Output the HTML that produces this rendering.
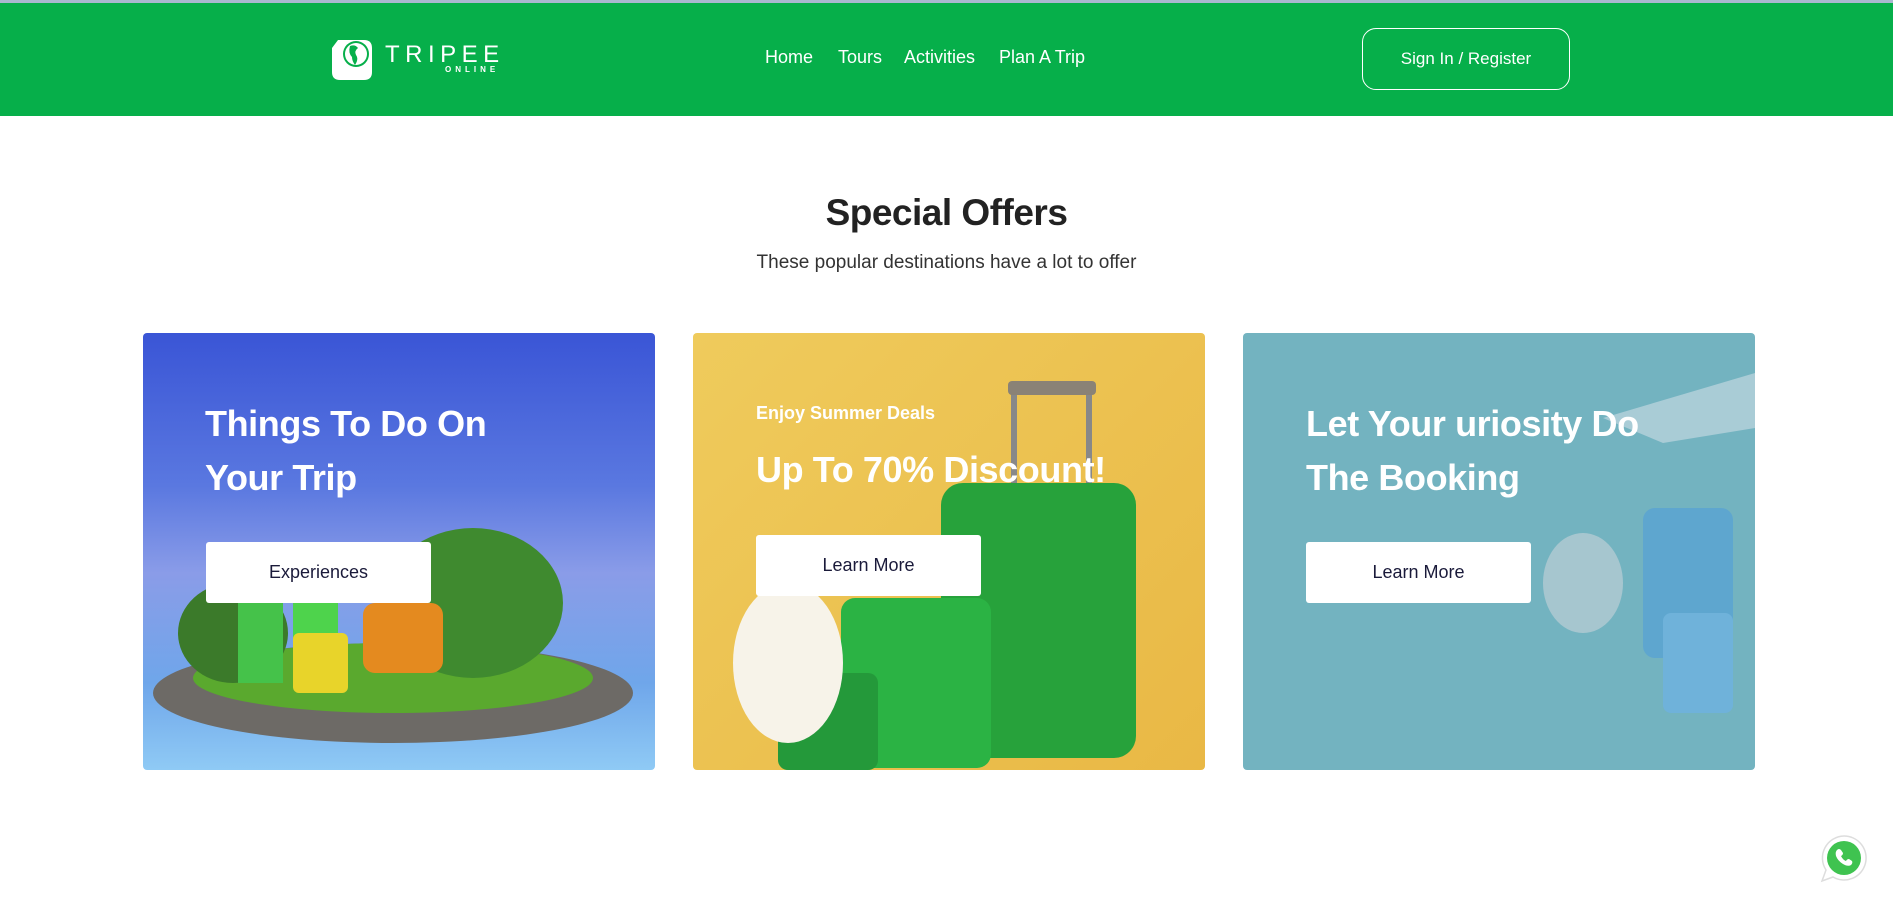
<!DOCTYPE html>
<html><head><meta charset="utf-8"><style>
*{margin:0;padding:0;box-sizing:border-box}
body{width:1893px;height:906px;overflow:hidden;background:#fff;font-family:"Liberation Sans",sans-serif;position:relative}
.top{position:absolute;left:0;top:0;width:1893px;height:3px;background:#a9b8d0}
.hdr{position:absolute;left:0;top:3px;width:1893px;height:113px;background:#06af4a}
.nav{position:absolute;top:47px;color:#fff;font-size:18px}
.btn0{position:absolute;left:1362px;top:28px;width:208px;height:62px;border:1.5px solid #fff;border-radius:14px;color:#fff;font-size:17px;text-align:center;line-height:60px}
h1{position:absolute;left:0;width:1893px;top:192px;text-align:center;font-size:37px;font-weight:bold;color:#222;letter-spacing:-0.5px}
.sub{position:absolute;left:0;width:1893px;top:252px;text-align:center;font-size:19px;color:#333}
.card{position:absolute;top:333px;width:512px;height:437px;border-radius:4px;overflow:hidden}
.t{position:absolute;color:#fff;font-weight:bold;font-size:36px;line-height:54px;letter-spacing:-0.4px}
.b{position:absolute;width:225px;height:61px;background:#fff;border-radius:3px;color:#1a1a3a;font-size:18px;text-align:center;line-height:61px}
</style></head><body>
<div class="top"></div>
<div class="hdr"></div>
<svg style="position:absolute;left:330px;top:38px" width="44" height="44" viewBox="0 0 44 44">
<path d="M8 2H34Q42 2 42 10V34Q42 42 34 42H10Q2 42 2 34V10Z" fill="#fff"/>
<circle cx="26" cy="16" r="13" fill="#06af4a"/><circle cx="26" cy="16" r="11" fill="#fff"/>
<path d="M20 8q5 -2 8 2q-4 3 -2 7q3 4 -1 10q-3 -4 -3 -8q-4 -4 -2 -11z" fill="#06af4a"/>
</svg>
<div style="position:absolute;left:385px;top:41px;color:#fff;font-size:24px;letter-spacing:5.5px;font-weight:300">TRIPEE</div>
<div style="position:absolute;left:445px;top:65px;color:#fff;font-size:8px;letter-spacing:4px;font-weight:bold">ONLINE</div>
<div class="nav" style="left:765px">Home</div>
<div class="nav" style="left:838px">Tours</div>
<div class="nav" style="left:904px">Activities</div>
<div class="nav" style="left:999px">Plan A Trip</div>
<div class="btn0">Sign In / Register</div>
<h1>Special Offers</h1>
<div class="sub">These popular destinations have a lot to offer</div>

<div class="card" style="left:143px;background:linear-gradient(180deg,#3a55d6 0%,#5a78e0 35%,#8a9ce8 55%,#6fa6ea 80%,#8fcaf5 100%)">
<svg style="position:absolute;left:0;top:180px" width="512" height="257"><ellipse cx="250" cy="180" rx="240" ry="50" fill="#6d6a66"/><ellipse cx="250" cy="165" rx="200" ry="35" fill="#5aa92e"/><ellipse cx="330" cy="90" rx="90" ry="75" fill="#3f8a2f"/><ellipse cx="90" cy="120" rx="55" ry="50" fill="#3b7a2a"/><rect x="95" y="60" width="45" height="110" fill="#45c24a"/><rect x="150" y="60" width="45" height="110" fill="#4ed34c"/><rect x="220" y="90" width="80" height="70" rx="12" fill="#e48a1f"/><rect x="150" y="120" width="55" height="60" rx="6" fill="#e8d42a"/></svg>
<div class="t" style="left:62px;top:64px">Things To Do On<br>Your Trip</div>
<div class="b" style="left:63px;top:209px">Experiences</div></div>

<div class="card" style="left:693px;background:linear-gradient(135deg,#efcb5c,#e9b845)">
<svg style="position:absolute;left:0;top:0" width="512" height="437"><rect x="318" y="52" width="6" height="100" fill="#888"/><rect x="393" y="52" width="6" height="100" fill="#888"/><rect x="315" y="48" width="88" height="14" rx="4" fill="#8a8276"/><rect x="248" y="150" width="195" height="275" rx="22" fill="#27a23b"/><rect x="148" y="265" width="150" height="170" rx="14" fill="#2bb344"/><rect x="85" y="340" width="100" height="97" rx="10" fill="#24993a"/><ellipse cx="95" cy="330" rx="55" ry="80" fill="#f7f3e9"/></svg>
<div style="position:absolute;left:63px;top:70px;color:#fff;font-weight:bold;font-size:18px">Enjoy Summer Deals</div>
<div class="t" style="left:63px;top:110px">Up To 70% Discount!</div>
<div class="b" style="left:63px;top:202px">Learn More</div></div>

<div class="card" style="left:1243px;background:#73b3c0">
<svg style="position:absolute;left:0;top:0" width="512" height="437"><path d="M360 85 L512 40 L512 95 L420 110Z" fill="#a9ccd6"/><rect x="400" y="175" width="90" height="150" rx="12" fill="#5ea6cf"/><rect x="420" y="280" width="70" height="100" rx="8" fill="#6fb2da"/><ellipse cx="340" cy="250" rx="40" ry="50" fill="#a6c6cf"/></svg>
<div class="t" style="left:63px;top:64px">Let Your uriosity Do<br>The Booking</div>
<div class="b" style="left:63px;top:209px">Learn More</div></div>

<svg style="position:absolute;left:1819px;top:833px" width="50" height="52" viewBox="0 0 50 52">
<path d="M25 3A22 22 0 1 1 14 44L3 48L7 37A22 22 0 0 1 25 3Z" fill="#fff" stroke="#ddd" stroke-width="1.5"/>
<circle cx="25" cy="25" r="17" fill="#3fc350"/>
<path d="M18 17q2-2 4 0l2 3q0 2-2 3q2 4 5 5q1-2 3-2l3 2q1 2-1 4q-3 2-8-1q-5-3-7-8q-1-4 1-6z" fill="#fff"/>
</svg>
</body></html>
